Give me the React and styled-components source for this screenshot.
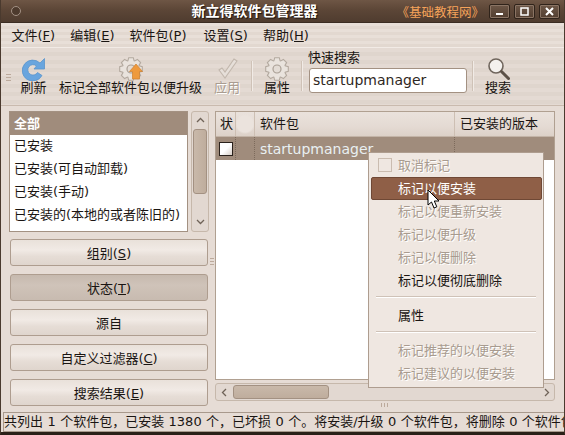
import styled, { createGlobalStyle } from "styled-components";

const Global = createGlobalStyle`
  html, body { margin: 0; padding: 0; }
  body {
    width: 565px;
    height: 435px;
    overflow: hidden;
    background: #e6dcd5;
    font-family: "DejaVu Sans", "Noto Sans CJK SC", sans-serif;
    font-size: 13px;
    color: #1a1512;
  }
`;

const Win = styled.div`
  position: relative;
  width: 565px;
  height: 435px;
  display: flex;
  flex-direction: column;
  box-sizing: border-box;
  border-left: 1px solid #4a3a2e;
  border-right: 1px solid #4a3a2e;
  border-bottom: 3px solid #2a2018;
  overflow: hidden;
  background: #e6dcd5;
`;

const TitleBar = styled.div`
  height: 23px;
  flex: none;
  position: relative;
  display: flex;
  align-items: center;
  padding: 0 4px 0 10px;
  background: linear-gradient(#6e5645, #5c4637 45%, #4f3c2f);
  border-bottom: 1px solid #3b2d23;
  box-sizing: border-box;
`;

const Orb = styled.div`
  width: 8px;
  height: 8px;
  border-radius: 50%;
  border: 1px solid #a39184;
  background: #4d3a2d;
`;

const Title = styled.div`
  position: absolute;
  left: 0;
  right: 0;
  top: 2px;
  text-align: center;
  padding-right: 56px;
  color: #fff;
  font-weight: 700;
  font-size: 14px;
  line-height: 18px;
  text-shadow: 1px 1px 1px #1c120b;
`;

const Brand = styled.div`
  margin-left: auto;
  margin-right: 1px;
  padding-top: 4px;
  color: #f5a35a;
  font-size: 12.5px;
  line-height: 18px;
  position: relative;
`;

const WinBtn = styled.div`
  width: 21px;
  height: 15px;
  margin-left: 4px;
  box-sizing: border-box;
  border: 1px solid #2f231a;
  border-radius: 2px;
  background: linear-gradient(#6d5747, #523e30);
  box-shadow: inset 0 0 0 1px #8a7464;
  display: flex;
  align-items: center;
  justify-content: center;
  position: relative;
  svg { display: block; }
`;

const MenuBar = styled.div`
  height: 25px;
  flex: none;
  display: flex;
  align-items: center;
  padding: 1px 0 0 3px;
  box-sizing: border-box;
  background: repeating-linear-gradient(#e8dfd8 0 3px, #e2d8d0 3px 6px);
  border-bottom: 1px solid #f2ebe6;
`;

const MenuItem = styled.div`
  padding: 0 7.5px;
  margin-right: ${(p) => p.$gap || 0}px;
  line-height: 18px;
  white-space: nowrap;
  u { text-underline-offset: 1px; }
`;

const ToolBar = styled.div`
  height: 58px;
  flex: none;
  display: flex;
  align-items: stretch;
  box-sizing: border-box;
  padding: 1px 0 0 5px;
  background: repeating-linear-gradient(#e4dad3 0 4px, #dfd5cd 4px 8px);
  border-bottom: 1px solid #c9baae;
`;

const Grip = styled.div`
  width: 5px;
  flex: none;
  align-self: center;
  height: 7px;
  margin-right: 3px;
  background: repeating-linear-gradient(#bcaa9c 0 1px, transparent 1px 3px);
`;

const Tool = styled.div`
  display: flex;
  flex-direction: column;
  align-items: center;
  width: ${(p) => p.$w}px;
  flex: none;
  padding-top: 8px;
  box-sizing: border-box;
  color: ${(p) => (p.$off ? "#a99c90" : "#1a1512")};
  text-shadow: ${(p) => (p.$off ? "1px 1px 0 #fff" : "none")};
  svg { display: block; flex: none; }
  span { line-height: 16px; white-space: nowrap; margin-top: -1px; }
`;

const ToolSep = styled.div`
  width: 2px;
  flex: none;
  margin: 12px 5px 14px;
  background: #cfc2b7;
  border-right: 1px solid #f1ebe6;
  box-sizing: border-box;
`;

const SearchBox = styled.div`
  width: 159px;
  flex: none;
  display: flex;
  flex-direction: column;
  padding-top: 1px;
  label { line-height: 16px; }
`;

const SearchInput = styled.div`
  height: 25px;
  margin: 2px 0 0 1px;
  box-sizing: border-box;
  border: 1px solid #a39182;
  border-radius: 3px;
  background: #fff;
  padding-left: 3px;
  line-height: 22px;
  font-size: 14px;
  color: #2e2723;
`;

const Body = styled.div`
  flex: 1;
  min-height: 0;
  display: flex;
  padding: 5px 9px 0 8px;
`;

const Side = styled.div`
  width: 200px;
  flex: none;
  display: flex;
  flex-direction: column;
`;

const FilterRow = styled.div`
  display: flex;
  gap: 3px;
  height: 121px;
  margin-bottom: 7px;
`;

const FilterList = styled.div`
  flex: 1;
  box-sizing: border-box;
  border: 1px solid #a39182;
  background: #fff;
  overflow: hidden;
`;

const FilterItem = styled.div`
  height: 23px;
  line-height: ${(p) => (p.$sel ? 23 : 22)}px;
  padding-left: 4px;
  white-space: nowrap;
  background: ${(p) => (p.$sel ? "#a08c7c" : "transparent")};
  color: ${(p) => (p.$sel ? "#fff" : "#1a1512")};
  font-weight: ${(p) => (p.$sel ? 700 : 400)};
`;

const VScroll = styled.div`
  width: 18px;
  flex: none;
  box-sizing: border-box;
  border: 1px solid #c6b8ab;
  border-radius: 3px;
  background: #e2d8d1;
  display: flex;
  flex-direction: column;
  align-items: center;
  padding: 4px 0 5px;
  svg { display: block; flex: none; }
`;

const VThumb = styled.div`
  width: 14px;
  height: 65px;
  flex: none;
  margin-top: 4px;
  margin-bottom: auto;
  box-sizing: border-box;
  border: 1px solid #a39182;
  border-radius: 3px;
  background: linear-gradient(90deg, #c9b9aa, #bfad9d);
`;

const Buttons = styled.div`
  display: flex;
  flex-direction: column;
  gap: 8px;
`;

const SideButton = styled.div`
  height: 27px;
  margin: 0 1px;
  box-sizing: border-box;
  border: 1px solid #ae9d8f;
  border-radius: 3px;
  display: flex;
  align-items: center;
  justify-content: center;
  white-space: nowrap;
  background: ${(p) =>
    p.$on
      ? "linear-gradient(#c6b9ae, #cfc3b9 40%, #c8bbb0)"
      : "linear-gradient(#e9e1da, #f1eae5 40%, #e6ddd6 65%, #dfd5cd)"};
`;

const Divider = styled.div`
  width: 6px;
  flex: none;
`;

const DividerGrip = styled.div`
  width: 4px;
  height: 7px;
  margin: 147px 0 0 1px;
  background: repeating-linear-gradient(#bcaa9c 0 1px, transparent 1px 3px);
`;

const ListPane = styled.div`
  flex: 1;
  display: flex;
  flex-direction: column;
  min-width: 0;
`;

const Table = styled.div`
  height: 269px;
  flex: none;
  box-sizing: border-box;
  border: 1px solid #b0a091;
  background: #fff;
  overflow: hidden;
`;

const HeadRow = styled.div`
  height: 25px;
  display: flex;
  box-sizing: border-box;
  background: linear-gradient(#eae2dc, #e4dad3 60%, #dcd1c8);
  border-bottom: 1px solid #c3b4a7;
`;

const HeadCell = styled.div`
  width: ${(p) => p.$w}px;
  flex: none;
  box-sizing: border-box;
  padding-left: ${(p) => p.$pad}px;
  line-height: 24px;
  white-space: nowrap;
  border-right: 1px solid #cdbfb3;
  background: ${(p) => (p.$blob ? "radial-gradient(circle at 50% 50%, #ebe3dd 0 8px, transparent 10px)" : "none")};
  &:last-child { border-right: 0; }
`;

const PkgRow = styled.div`
  height: 23px;
  display: flex;
  background: #a08c7c;
`;

const PkgCell = styled.div`
  width: ${(p) => p.$w}px;
  flex: none;
  box-sizing: border-box;
  padding-left: ${(p) => p.$pad}px;
  display: flex;
  align-items: center;
  color: #e9f0f2;
  font-size: 14px;
  border-right: 1px dotted #7c6a5b;
  &:last-child { border-right: 0; }
`;

const Check = styled.div`
  width: 14px;
  height: 14px;
  box-sizing: border-box;
  border: 1px solid #2a211b;
  background: linear-gradient(135deg, #fff 50%, #d8cfc8);
`;

const HScroll = styled.div`
  height: 18px;
  flex: none;
  margin-top: 3px;
  box-sizing: border-box;
  border: 1px solid #c6b8ab;
  border-radius: 3px;
  background: #e2d8d1;
  display: flex;
  align-items: center;
  padding: 0 3px 0 4px;
  svg { display: block; flex: none; }
`;

const HThumb = styled.div`
  width: 96px;
  height: 14px;
  margin-left: 4px;
  margin-right: auto;
  box-sizing: border-box;
  border: 1px solid #a39182;
  border-radius: 3px;
  background: linear-gradient(#c9b9aa, #bfad9d);
`;

const PaneGrip = styled.div`
  width: 8px;
  height: 4px;
  margin-top: 2px;
  align-self: center;
  background: repeating-linear-gradient(90deg, #bcaa9c 0 1px, transparent 1px 3px);
`;

const Status = styled.div`
  height: 20px;
  flex: none;
  margin-left: 2px;
  box-sizing: border-box;
  border: 1px solid #a8998c;
  border-right: 0;
  line-height: 18px;
  white-space: nowrap;
  word-spacing: 0.3px;
  overflow: hidden;
`;

const Popup = styled.div`
  position: absolute;
  left: 367px;
  top: 152px;
  width: 176px;
  height: 236px;
  box-sizing: border-box;
  padding: 1px 1px 0 2px;
  border: 1px solid #ae9d8f;
  background: #efe7e1;
  display: flex;
  flex-direction: column;
`;

const PopItem = styled.div`
  height: 23px;
  flex: none;
  box-sizing: border-box;
  padding-left: ${(p) => (p.$hot ? 26 : 27)}px;
  line-height: ${(p) => (p.$hot ? 21 : 23)}px;
  white-space: nowrap;
  color: ${(p) => (p.$hot ? "#fff" : p.$off ? "#a89b8f" : "#1a1512")};
  text-shadow: ${(p) => (p.$off ? "1px 1px 0 #fff" : "none")};
  background: ${(p) => (p.$hot ? "#8f5f47" : "transparent")};
  border: ${(p) => (p.$hot ? "1px solid #6f4835" : "0")};
  border-radius: ${(p) => (p.$hot ? "2px" : "0")};
  position: relative;
`;

const PopCheck = styled.div`
  position: absolute;
  left: 7px;
  top: 4px;
  width: 14px;
  height: 14px;
  box-sizing: border-box;
  border: 1px solid #cabcb0;
  background: #efe7e1;
`;

const PopSep = styled.div`
  height: 2px;
  flex: none;
  margin: 4px 6px 6px 5px;
  background: #cfc2b7;
  border-bottom: 1px solid #fff;
  box-sizing: border-box;
`;

const Cursor = styled.svg`
  position: absolute;
  left: 426px;
  top: 189px;
`;

// gear outline with 8 teeth, same shape for the toolbar buttons
const gearPath = (() => {
  const pts = [];
  for (let i = 0; i < 8; i++) {
    const a = (i * Math.PI) / 4 - Math.PI / 2;
    const s = 0.2;
    const p = (r, t) => `${(12 + r * Math.cos(t)).toFixed(1)} ${(12 + r * Math.sin(t)).toFixed(1)}`;
    pts.push(p(8.8, a - s * 1.8), p(11.5, a - s), p(11.5, a + s), p(8.8, a + s * 1.8));
  }
  return "M" + pts.join("L") + "Z";
})();

const Gear = ({ children }) => (
  <svg width="24" height="24" viewBox="0 0 24 24">
    <path d={gearPath} fill="#e9e3dd" stroke="#b3a99f" strokeWidth="1.1" />
    <circle cx="12" cy="12" r="4" fill="#e3dcd5" stroke="#a99f95" strokeWidth="1.2" />
    {children}
  </svg>
);

const Chev = ({ d }) => (
  <svg width="9" height="9" viewBox="0 0 9 9">
    <path d={d} fill="none" stroke="#6f6358" strokeWidth="1.3" />
  </svg>
);

const filters = ["已安装", "已安装(可自动卸载)", "已安装(手动)", "已安装的(本地的或者陈旧的)"];

const App = () => (
  <Win>
    <Global />
    <TitleBar>
      <Orb />
      <Title>新立得软件包管理器</Title>
      <Brand>《基础教程网》</Brand>
      <WinBtn>
        <svg width="9" height="9" viewBox="0 0 9 9"><rect x="1" y="6" width="7" height="2" fill="#fff" /></svg>
      </WinBtn>
      <WinBtn>
        <svg width="9" height="9" viewBox="0 0 9 9"><rect x="1" y="1" width="7" height="7" fill="none" stroke="#fff" strokeWidth="1.5" /></svg>
      </WinBtn>
      <WinBtn>
        <svg width="9" height="9" viewBox="0 0 9 9"><path d="M1 1l7 7M8 1l-7 7" stroke="#fff" strokeWidth="2" /></svg>
      </WinBtn>
    </TitleBar>

    <MenuBar>
      <MenuItem>文件(<u>F</u>)</MenuItem>
      <MenuItem>编辑(<u>E</u>)</MenuItem>
      <MenuItem $gap={2}>软件包(<u>P</u>)</MenuItem>
      <MenuItem>设置(<u>S</u>)</MenuItem>
      <MenuItem>帮助(<u>H</u>)</MenuItem>
    </MenuBar>

    <ToolBar>
      <Grip />
      <Tool $w={39}>
        <svg width="24" height="24" viewBox="0 0 24 24">
          <path d="M18 6A10.500 10.500 0 1 0 20 18.500L15.500 15.500A5.200 5.200 0 1 1 14.500 9L12 12H22.500V1.500Z" fill="#69a5de" stroke="#5a94cc" strokeWidth="0.8" />
        </svg>
        <span>刷新</span>
      </Tool>
      <Tool $w={155}>
        <Gear>
          <path d="M17 7l6.500 7.500H20.500V22H13.500V14.500H10.500z" fill="#ee9a3e" stroke="#cf7f2e" strokeWidth="0.7" />
        </Gear>
        <span>标记全部软件包以便升级</span>
      </Tool>
      <Tool $w={38} $off>
        <svg width="24" height="24" viewBox="0 0 24 24">
          <path d="M4 13l6 8L22 4l-3-2L10 15l-3-4z" fill="#e6dfd9" stroke="#c2b7ad" strokeWidth="1.1" />
        </svg>
        <span>应用</span>
      </Tool>
      <ToolSep />
      <Tool $w={38}>
        <Gear />
        <span>属性</span>
      </Tool>
      <ToolSep />
      <SearchBox>
        <label>快速搜索</label>
        <SearchInput>startupmanager</SearchInput>
      </SearchBox>
      <ToolSep />
      <Tool $w={38}>
        <svg width="24" height="24" viewBox="0 0 24 24">
          <circle cx="10" cy="9" r="7" fill="#f4f1ee" stroke="#6f655c" strokeWidth="1.6" />
          <path d="M15.500 14.500L22.500 21.500" stroke="#5c5147" strokeWidth="3" strokeLinecap="round" />
        </svg>
        <span>搜索</span>
      </Tool>
    </ToolBar>

    <Body>
      <Side>
        <FilterRow>
          <FilterList>
            <FilterItem $sel>全部</FilterItem>
            {filters.map((f) => (
              <FilterItem key={f}>{f}</FilterItem>
            ))}
          </FilterList>
          <VScroll>
            <Chev d="M1 6l3.500-3.500L8 6" />
            <VThumb />
            <Chev d="M1 3l3.500 3.500L8 3" />
          </VScroll>
        </FilterRow>
        <Buttons>
          <SideButton><span>组别(<u>S</u>)</span></SideButton>
          <SideButton $on><span>状态(<u>T</u>)</span></SideButton>
          <SideButton>源自</SideButton>
          <SideButton><span>自定义过滤器(<u>C</u>)</span></SideButton>
          <SideButton><span>搜索结果(<u>E</u>)</span></SideButton>
        </Buttons>
      </Side>

      <Divider><DividerGrip /></Divider>

      <ListPane>
        <Table>
          <HeadRow>
            <HeadCell $w={20} $pad={4}>状</HeadCell>
            <HeadCell $w={19} $blob />
            <HeadCell $w={200} $pad={5}>软件包</HeadCell>
            <HeadCell $w={99} $pad={5}>已安装的版本</HeadCell>
          </HeadRow>
          <PkgRow>
            <PkgCell $w={20} $pad={3}><Check /></PkgCell>
            <PkgCell $w={19} />
            <PkgCell $w={200} $pad={5}>startupmanager</PkgCell>
            <PkgCell $w={99} />
          </PkgRow>
        </Table>
        <HScroll>
          <Chev d="M6 1L2.500 4.500 6 8" />
          <HThumb />
          <Chev d="M3 1L6.500 4.500 3 8" />
        </HScroll>
        <PaneGrip />
      </ListPane>
    </Body>

    <Status>共列出 1 个软件包，已安装 1380 个，已坏损 0 个。将安装/升级 0 个软件包，将删除 0 个软件包</Status>

    <Popup>
      <PopItem $off><PopCheck />取消标记</PopItem>
      <PopItem $hot>标记以便安装</PopItem>
      <PopItem $off>标记以便重新安装</PopItem>
      <PopItem $off>标记以便升级</PopItem>
      <PopItem $off>标记以便删除</PopItem>
      <PopItem>标记以便彻底删除</PopItem>
      <PopSep />
      <PopItem>属性</PopItem>
      <PopSep />
      <PopItem $off>标记推荐的以便安装</PopItem>
      <PopItem $off>标记建议的以便安装</PopItem>
    </Popup>

    <Cursor width="14" height="20" viewBox="0 0 14 20">
      <path d="M1 1v15l3.500-3 2.500 6 2.800-1.200-2.500-5.800h4.700z" fill="#fff" stroke="#000" strokeWidth="1" />
    </Cursor>
  </Win>
);

export default App;
